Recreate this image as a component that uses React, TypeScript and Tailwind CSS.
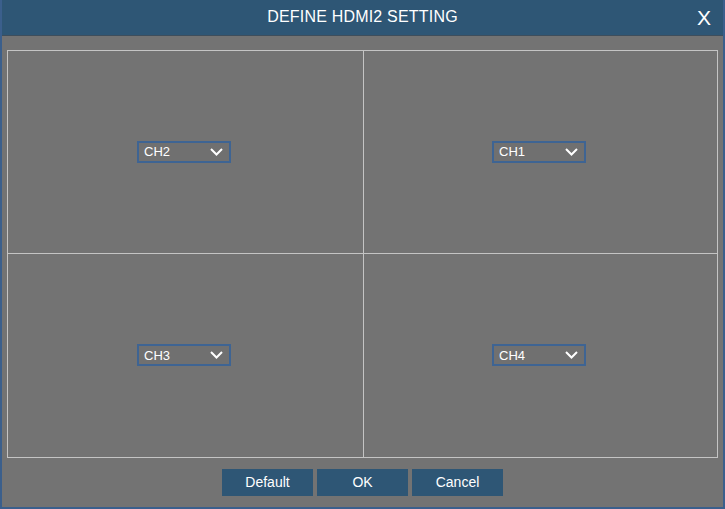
import React from 'react'

function ChannelSelect(props: { label: string }) {
  return (
    <div className="flex items-center justify-between w-[94px] h-[22px] border-2 border-[#3e6493] bg-[#707070] pl-[5px] pr-[6px]">
      <span className="text-[13px] text-white leading-none">{props.label}</span>
      <svg width="13" height="8" viewBox="0 0 13 8" fill="none">
        <path d="M1 1 L6.5 6.5 L12 1" stroke="white" strokeWidth="2" />
      </svg>
    </div>
  )
}

function Cell(props: { label: string; className: string }) {
  return (
    <div className={`flex items-center justify-center pr-[3px] pb-[1px] ${props.className}`}>
      <ChannelSelect label={props.label} />
    </div>
  )
}

export default function App() {
  return (
    <div
      className="w-[725px] h-[509px] bg-[#737373] flex flex-col border-l-2 border-r-2 border-b-2 border-[#3b5f8c] overflow-hidden"
      style={{ fontFamily: '"Liberation Sans", Arial, sans-serif' }}
    >
      <div className="relative h-[36px] shrink-0 bg-[#2e5675] border-b border-[#3e4e5c] flex items-center justify-center">
        <span className="text-white text-[16px] tracking-[0.2px] pb-[2px]">DEFINE HDMI2 SETTING</span>
        <span className="absolute right-[12px] top-[7px] text-white text-[21px] leading-none">X</span>
      </div>
      <div className="pl-[5px] pt-[14px]">
        <div className="grid grid-cols-[356px_353px] grid-rows-[203px_203px] w-[711px] border border-[#c4c4c4]">
          <Cell label="CH2" className="border-r border-b border-[#c4c4c4]" />
          <Cell label="CH1" className="border-b border-[#c4c4c4]" />
          <Cell label="CH3" className="border-r border-[#c4c4c4]" />
          <Cell label="CH4" className="" />
        </div>
      </div>
      <div className="flex justify-center gap-[4px] mt-[11px]">
        {['Default', 'OK', 'Cancel'].map((t) => (
          <button
            key={t}
            className="w-[91px] h-[27px] bg-[#2e5675] text-white text-[14px] flex items-center justify-center"
          >
            {t}
          </button>
        ))}
      </div>
    </div>
  )
}
